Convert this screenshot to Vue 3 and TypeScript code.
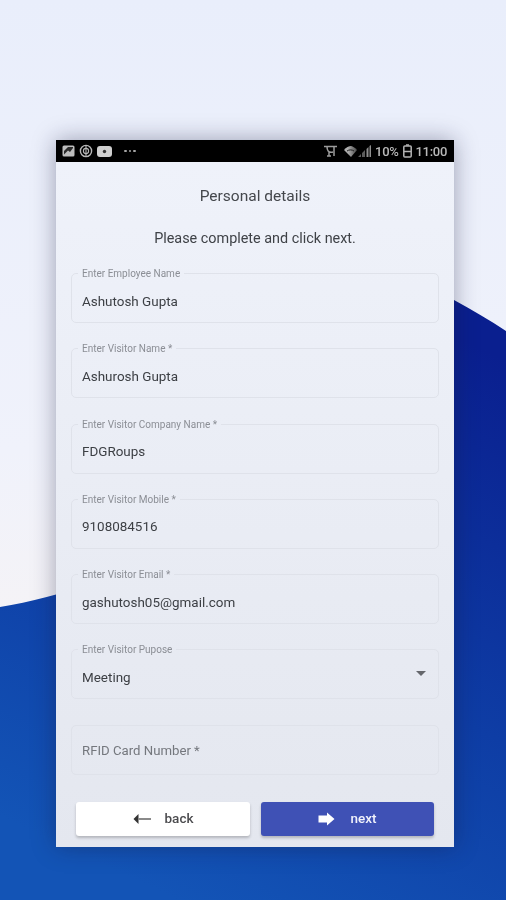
<script setup lang="ts">
const fields = [
  { label: "Enter Employee Name", value: "Ashutosh Gupta" },
  { label: "Enter Visitor Name *", value: "Ashurosh Gupta" },
  { label: "Enter Visitor Company Name *", value: "FDGRoups" },
  { label: "Enter Visitor Mobile *", value: "9108084516" },
  { label: "Enter Visitor Email *", value: "gashutosh05@gmail.com" },
  { label: "Enter Visitor Pupose", value: "Meeting", select: true },
  { label: "", value: "RFID Card Number *", placeholder: true },
];
</script>

<template>
  <div class="page">
    <svg class="wave" width="506" height="900" viewBox="0 0 506 900">
      <defs>
        <linearGradient id="sky" x1="0" y1="0" x2="0" y2="1">
          <stop offset="0" stop-color="#e9eefb" />
          <stop offset="0.5" stop-color="#f0f2fb" />
          <stop offset="0.7" stop-color="#f5f3f6" />
        </linearGradient>
        <linearGradient id="sea" x1="0.75" y1="0" x2="0.35" y2="1">
          <stop offset="0" stop-color="#0a1f8f" />
          <stop offset="0.55" stop-color="#0e3da5" />
          <stop offset="1" stop-color="#1354b6" />
        </linearGradient>
      </defs>
      <rect width="506" height="900" fill="url(#sky)" />
      <path d="M0 607 C 60 597 130 575 200 530 C 300 465 400 350 454 300 C 472 310 490 320 506 331 L506 900 L0 900 Z" fill="url(#sea)" />
    </svg>

    <main class="phone">
      <header class="status">
        <div class="status-left">
          <svg width="13" height="12" viewBox="0 0 13 12">
            <rect x="0.500" y="0.500" width="12" height="11" rx="1.500" fill="#bdbdbd" />
            <path d="M2 9.500 L6 5.500 L8 7 L11 3 V2 H6 L2 6Z" fill="#2a2a2a" />
          </svg>
          <svg width="14" height="14" viewBox="0 0 14 14" fill="none" stroke="#b8b8b8">
            <circle cx="7" cy="7" r="5.600" stroke-width="1.400" />
            <circle cx="7" cy="7" r="2.600" stroke-width="1.100" />
            <path d="M7 2 V12" stroke-width="1.100" />
          </svg>
          <svg width="15" height="11" viewBox="0 0 15 11">
            <rect width="15" height="11" rx="3" fill="#cfcfcf" />
            <circle cx="7.500" cy="5.500" r="1.700" fill="#333" />
          </svg>
          <span class="dots"><i></i><i></i><i></i></span>
        </div>
        <div class="status-right">
          <svg class="sim" width="13" height="14" viewBox="0 0 13 14" fill="none" stroke="#9c9c9c" stroke-width="1.500">
            <path d="M0 2.500 H13 M3 2.500 C3 6 4 9 9 8 M10 2.500 V12 M3 12 H7 M5 8 V12" />
          </svg>
          <svg class="wifi" width="13" height="11" viewBox="0 0 13 11">
            <defs>
              <linearGradient id="fade" x1="0" y1="0" x2="1" y2="0">
                <stop offset="0.300" stop-color="#b0b0b0" />
                <stop offset="1" stop-color="#4a4a4a" />
              </linearGradient>
            </defs>
            <path d="M0 4 C2 1.500 5 0 7 0 C9 0.500 11.500 2 13 4 L7 11Z" fill="url(#fade)" />
            <path d="M3 5 C5 3.500 8 3.500 10 5" stroke="#222" fill="none" />
          </svg>
          <svg class="signal" width="13" height="12" viewBox="0 0 13 12">
            <path d="M0 12 L3 9 V12Z M4 12 V8 L7 5 V12Z" fill="#5c5c5c" />
            <path d="M8.500 12 V4 L10.500 2 V12Z M11.500 12 V1 L13 0 V12Z" fill="#8f8f8f" />
          </svg>
          <span class="pct">10%</span>
          <svg class="battery" width="9" height="14" viewBox="0 0 9 14" fill="none" stroke="#b4b4b4" stroke-width="1.500">
            <rect x="0.800" y="2" width="7.400" height="11" rx="1" />
            <path d="M3 1 H6 M1 7.500 H8" />
          </svg>
          <span class="clock">11:00</span>
        </div>
      </header>

      <section class="body">
        <h1>Personal details</h1>
        <p class="hint">Please complete and click next.</p>

        <div class="fields">
          <div v-for="f in fields" :key="f.value" class="field">
            <fieldset :class="['outline', !f.label && 'plain']">
              <legend v-if="f.label">{{ f.label }}</legend>
            </fieldset>
            <span :class="['value', f.placeholder && 'placeholder']">{{ f.value }}</span>
            <span v-if="f.select" class="caret"></span>
          </div>
        </div>

        <div class="actions">
          <button class="btn back" type="button">
            <svg width="18" height="12" viewBox="0 0 18 12">
              <path d="M0.500 6 L5.500 1 V11Z" fill="#333" />
              <path d="M5 5 H18 V7 H5Z" fill="#8a8a8a" />
            </svg>
            <span>back</span>
          </button>
          <button class="btn next" type="button">
            <svg width="17" height="14" viewBox="0 0 17 14">
              <path d="M0.500 3.500 H9 V0.500 L16.500 7 L9 13.500 V10.500 H0.500Z" fill="#fff" />
            </svg>
            <span>next</span>
          </button>
        </div>
      </section>
    </main>
  </div>
</template>

<style>
html,
body {
  margin: 0;
  background: #e9eefb;
}
</style>

<style scoped>
.page {
  position: relative;
  width: 506px;
  height: 900px;
  overflow: hidden;
  padding: 140px 52px 0 56px;
  box-sizing: border-box;
  font-family: Roboto, "Liberation Sans", sans-serif;
}

.wave {
  position: absolute;
  left: 0;
  top: 0;
}

.phone {
  position: relative;
  width: 398px;
  height: 707px;
  display: flex;
  flex-direction: column;
  box-shadow: 0 0 22px rgba(20, 24, 60, 0.38);
}

.status {
  height: 22px;
  flex: none;
  background: #000;
  display: flex;
  align-items: center;
  justify-content: space-between;
  padding: 0 7px 0 6px;
  filter: blur(0.4px);
}

.status-left,
.status-right {
  display: flex;
  align-items: center;
}

.status-left {
  gap: 4px;
}

.status-right {
  color: #b9b9b9;
  font-size: 13px;
  font-weight: 500;
}

.wifi {
  margin-left: 7px;
}

.signal {
  margin-left: 1px;
}

.pct {
  margin-left: 4px;
  letter-spacing: -0.300px;
}

.battery {
  margin-left: 4px;
}

.clock {
  margin-left: 4px;
  letter-spacing: -0.300px;
}

.dots {
  display: flex;
  gap: 2px;
  margin-left: 8px;
}

.dots i {
  width: 2.500px;
  height: 2.500px;
  border-radius: 50%;
  background: #a5a5a5;
}

.body {
  flex: 1;
  display: flex;
  flex-direction: column;
  background: linear-gradient(#eff2fa, #e4e7ef);
  padding: 0 15px;
  color: #3c3f44;
}

h1,
.hint,
.value,
legend,
.btn span {
  filter: blur(0.3px);
}

h1 {
  margin: 25px 0 0;
  font-size: 15.500px;
  line-height: 18px;
  font-weight: 400;
  text-align: center;
  color: #44474c;
}

.hint {
  margin: 25px 0 0;
  font-size: 14.400px;
  line-height: 18px;
  text-align: center;
  color: #3f4247;
}

.fields {
  display: flex;
  flex-direction: column;
  gap: 25.300px;
  margin-top: 25px;
}

.field {
  position: relative;
  height: 50px;
  box-sizing: border-box;
  display: flex;
  align-items: center;
  padding: 6px 11px 0;
}

/* notched outline, the legend cuts the top border */
.outline {
  position: absolute;
  inset: -5px 0 0 0;
  margin: 0;
  padding: 0 6px;
  border: 1px solid #dfe2ea;
  border-radius: 5px;
  pointer-events: none;
}

.outline.plain {
  top: 0;
}

.outline legend {
  padding: 0 4px;
  font-size: 10px;
  line-height: 11px;
  color: #8b8e95;
}

.value {
  font-size: 13.450px;
  color: #3c3f44;
}

.placeholder {
  font-size: 13.200px;
  color: #74777d;
  margin-top: -5px;
}

.caret {
  position: absolute;
  right: 13px;
  top: 22px;
  border-left: 5px solid transparent;
  border-right: 5px solid transparent;
  border-top: 5px solid #65676c;
}

.actions {
  display: flex;
  justify-content: space-between;
  margin: 27px 5px 0;
}

.btn {
  width: 174px;
  height: 34px;
  border: 0;
  border-radius: 3px;
  display: flex;
  align-items: center;
  justify-content: center;
  gap: 12px;
  padding: 0 0 2px;
  font-family: inherit;
  font-size: 13.500px;
  font-weight: 500;
  box-shadow: 0 2px 3px rgba(0, 0, 0, 0.22);
}

.btn svg {
  margin-top: 2px;
}

.back {
  background: #fff;
  color: #4b4b4e;
}

.back span {
  margin-left: 2px;
}

.next {
  width: 173px;
  background: #3f51b5;
  color: #f1f2fb;
}

.next span {
  margin-left: 3px;
}
</style>
